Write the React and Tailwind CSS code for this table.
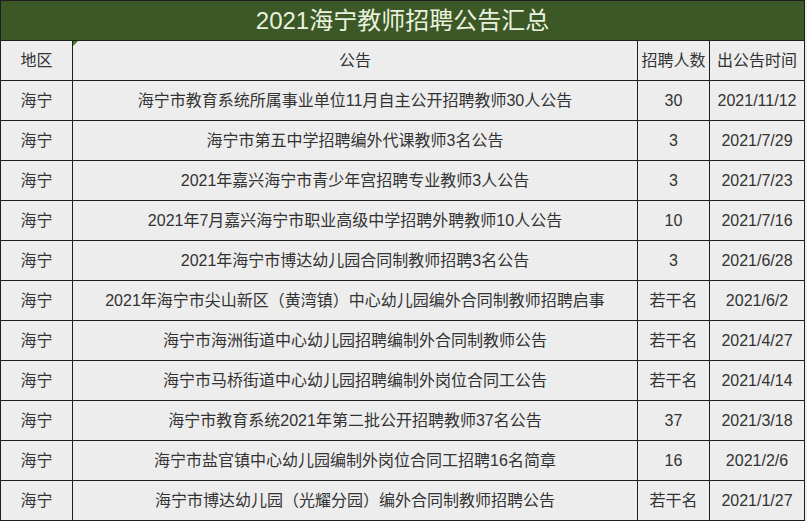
import React from "react";

const rows = [
  ["海宁", "海宁市教育系统所属事业单位11月自主公开招聘教师30人公告", "30", "2021/11/12"],
  ["海宁", "海宁市第五中学招聘编外代课教师3名公告", "3", "2021/7/29"],
  ["海宁", "2021年嘉兴海宁市青少年宫招聘专业教师3人公告", "3", "2021/7/23"],
  ["海宁", "2021年7月嘉兴海宁市职业高级中学招聘外聘教师10人公告", "10", "2021/7/16"],
  ["海宁", "2021年海宁市博达幼儿园合同制教师招聘3名公告", "3", "2021/6/28"],
  ["海宁", "2021年海宁市尖山新区（黄湾镇）中心幼儿园编外合同制教师招聘启事", "若干名", "2021/6/2"],
  ["海宁", "海宁市海洲街道中心幼儿园招聘编制外合同制教师公告", "若干名", "2021/4/27"],
  ["海宁", "海宁市马桥街道中心幼儿园招聘编制外岗位合同工公告", "若干名", "2021/4/14"],
  ["海宁", "海宁市教育系统2021年第二批公开招聘教师37名公告", "37", "2021/3/18"],
  ["海宁", "海宁市盐官镇中心幼儿园编制外岗位合同工招聘16名简章", "16", "2021/2/6"],
  ["海宁", "海宁市博达幼儿园（光耀分园）编外合同制教师招聘公告", "若干名", "2021/1/27"],
];

const cell = "bg-[#ededed] flex items-center justify-center text-[16px] text-[#333333] whitespace-nowrap";

export default function App() {
  return (
    <div
      className="w-[807px] h-[521px] bg-[#efefef]"
      style={{ fontFamily: '"Liberation Sans", "Noto Sans CJK SC", sans-serif' }}
    >
      <div className="w-[805px] bg-[#1e1e1e] p-px grid grid-cols-[71px_564px_71px_94px] auto-rows-[39px] gap-px">
        <div className="col-span-4 bg-[#3c5826] flex items-center justify-center text-[24px] text-[#eaf1df]">
          2021海宁教师招聘公告汇总
        </div>
        <div className={cell}>地区</div>
        <div className={cell + " relative"}>
          公告
          <span className="absolute left-0 top-0 w-0 h-0 border-t-[5px] border-r-[5px] border-t-[#3f7a2a] border-r-transparent" />
        </div>
        <div className={cell}>招聘人数</div>
        <div className={cell}>出公告时间</div>
        {rows.map((r, i) => (
          <React.Fragment key={i}>
            <div className={cell}>{r[0]}</div>
            <div className={cell}>{r[1]}</div>
            <div className={cell}>{r[2]}</div>
            <div className={cell}>{r[3]}</div>
          </React.Fragment>
        ))}
      </div>
    </div>
  );
}
